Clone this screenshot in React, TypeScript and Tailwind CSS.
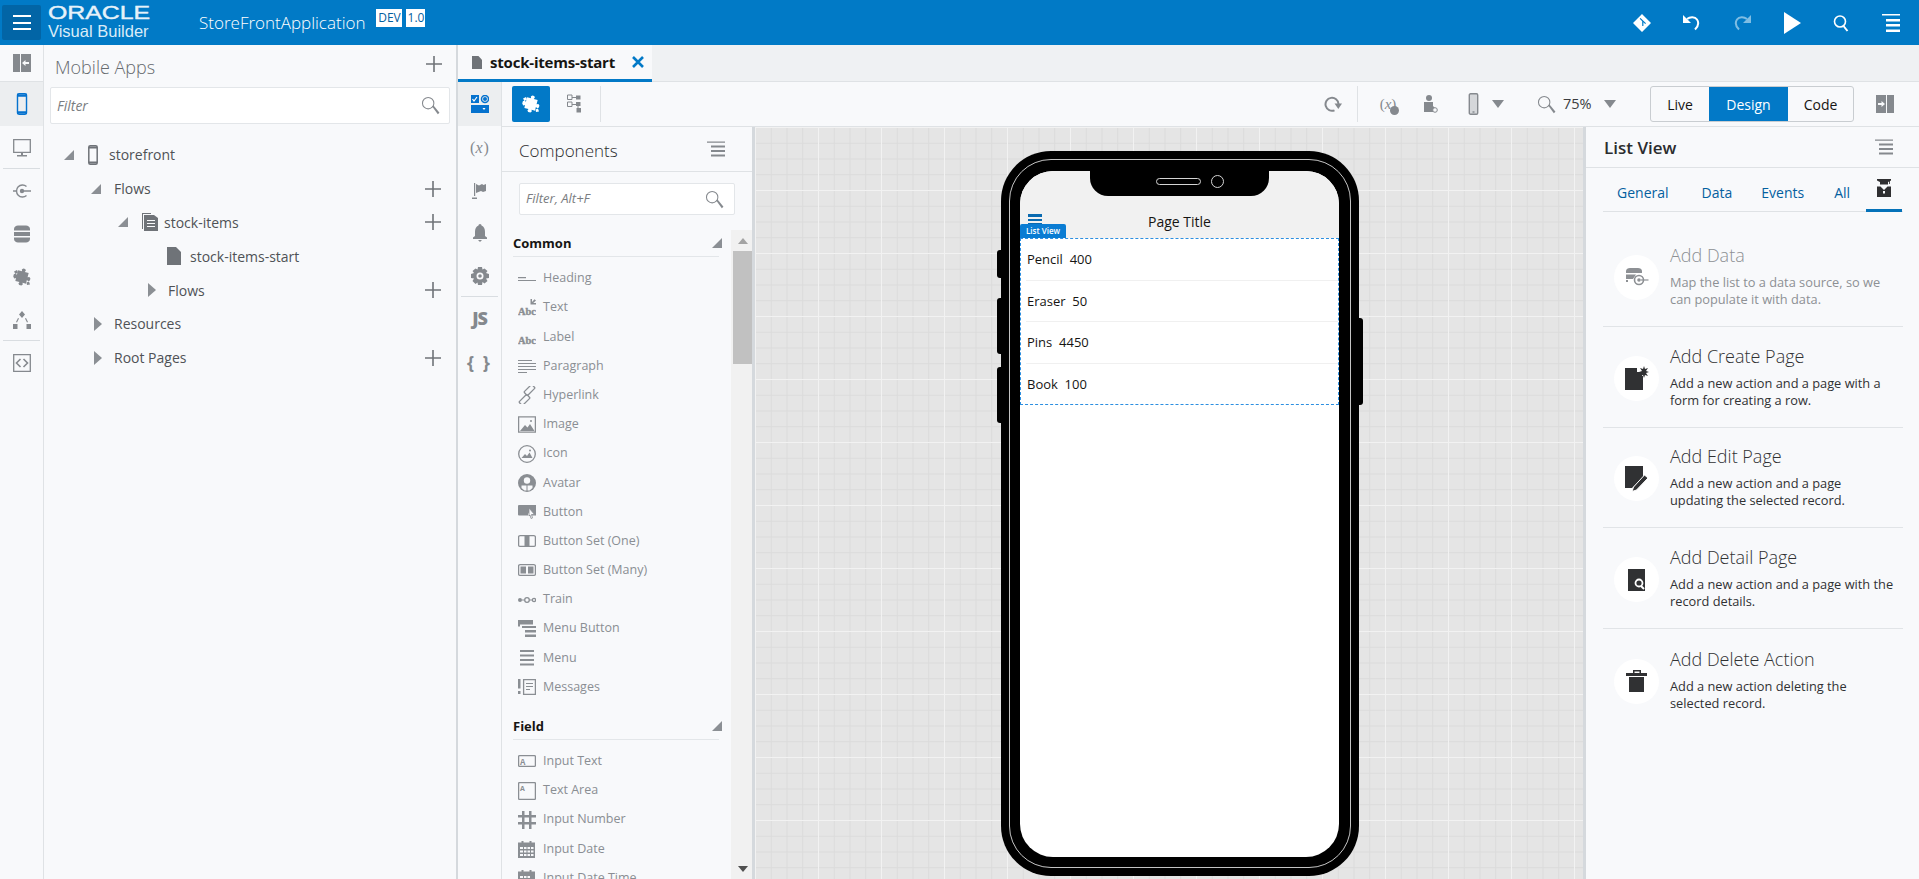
import type { ReactNode } from 'react';

type IconProps = { className?: string };

function Svg({ className, size = 18, children }: { className?: string; size?: number; children: ReactNode }) {
	return (
		<svg viewBox="0 0 18 18" width={size} height={size} fill="currentColor" className={className}>
			{children}
		</svg>
	);
}

const line = { fill: 'none', stroke: 'currentColor', strokeWidth: 1.3 };

// --- shared icons ---
function PlusIcon() {
	return (
		<svg viewBox="0 0 16 16" width="16" height="16" className="text-[#6f7378]" fill="currentColor">
			<path d="M7.2 0h1.6v7.2H16v1.6H8.8V16H7.2V8.8H0V7.2h7.2z" />
		</svg>
	);
}
function SearchIcon({ className }: IconProps) {
	return (
		<Svg className={className} size={19}>
			<circle cx="6.8" cy="6.8" r="5.4" fill="none" stroke="currentColor" strokeWidth="1" />
			<path d="M10.6 10l1.3-1.100 5.600 7-1.600 1.300z" />
		</Svg>
	);
}
function LinesIcon({ className }: IconProps) {
	return (
		<Svg className={className}>
			<path d="M0 1.500h18v1.200H0zM4 5.500h14v2H4zM4 10h14v2H4zM4 14.500h14v2H4z" />
		</Svg>
	);
}
function PuzzleIcon({ className }: IconProps) {
	return (
		<Svg className={className}>
			<g transform="rotate(14 9 9)">
				<path d="M3.500 3.500h4.200L7 1.800 8.200.5h2l1 1.300-.7 1.700h4V8l1.700-.7 1.300 1v2.200l-1.300 1-1.700-.7v3.700h-3.600l.7 1.700-1.100 1.300H8.200l-1.100-1.300.7-1.700H3.500v-3l-1.700.8L.4 10.700V8.300l1.400-1.100 1.700.8z" />
			</g>
			<path d="M1 3.500l3-1.500 1 2.500-2.500 1.500zM13.500 14.500l2.500-1 1 3-3 .5z" />
		</Svg>
	);
}
function PageIcon({ className }: IconProps) {
	return (
		<svg viewBox="0 0 14 18" width="14" height="18" fill="currentColor" className={className}>
			<path d="M0 0h9l5 5v13H0z" />
		</svg>
	);
}
function Phone({ className }: IconProps) {
	return (
		<svg viewBox="0 0 10 20" width="10" height="20" fill="none" className={className}>
			<rect x=".8" y=".8" width="8.4" height="18.4" rx="1.5" stroke="currentColor" strokeWidth="1.5" />
			<path d="M.8 2.500h8.400M.8 17.500h8.400" stroke="currentColor" strokeWidth="1.8" />
		</svg>
	);
}
function TriOpen() {
	return (
		<svg viewBox="0 0 10 10" width="10" height="10" fill="#8b8f94">
			<path d="M10 0v10H0z" />
		</svg>
	);
}
function TriClosed() {
	return (
		<svg viewBox="0 0 8 14" width="8" height="14" fill="#8b8f94">
			<path d="M0 0l8 7-8 7z" />
		</svg>
	);
}

// --- left rail icons ---
function CollapseIcon({ flip }: { flip?: boolean }) {
	return (
		<Svg className={flip ? 'text-[#85898e] -scale-x-100' : 'text-[#85898e]'}>
			<path d="M0 0h7v18H0zM8 0h10v18H8z" />
			<path d="M9 9l3.500-3v2H16v2h-3.500v2z" fill="#f8f9fb" />
		</Svg>
	);
}
function ServiceIcon() {
	return (
		<Svg className="text-[#85898e]">
			<circle cx="9" cy="9" r="2.200" />
			<path d="M13.500 4.500A6 6 0 1 0 13.500 13.500" {...line} strokeWidth="1.4" />
			<path d="M0 9h3M9 9h9" {...line} />
		</Svg>
	);
}
function DatabaseIcon() {
	return (
		<Svg className="text-[#85898e]">
			<path d="M1 4c0-2 2-3.500 4-3.500h8c2 0 4 1.500 4 3.500v1.500H1zM1 7h16v4H1zM1 12.500h16V14c0 2-2 3.500-4 3.500H5c-2 0-4-1.500-4-3.500z" />
		</Svg>
	);
}
function ProcessIcon() {
	return (
		<Svg className="text-[#85898e]">
			<path d="M9 0l3 3.500L9 7 6 3.500zM0 13h4.500v5H0zM13.500 13H18v5h-4.500zM3 11l2-4 1 .5-2 4zM15 11l-2-4-1 .5 2 4z" />
		</Svg>
	);
}
function CodeFrameIcon() {
	return (
		<Svg className="text-[#85898e]">
			<path d="M.7.7h16.600v16.600H.7z" {...line} />
			<path d="M7.500 5L3.500 9l4 4M10.500 5l4 4-4 4" {...line} strokeWidth="1.6" />
		</Svg>
	);
}

// --- component list icons ---
const Abc = () => (
	<text x="0" y="16" fontSize="11" fontWeight="700" stroke="currentColor" strokeWidth=".4" fontFamily="'Liberation Serif', serif" textLength="18" lengthAdjust="spacingAndGlyphs">
		Abc
	</text>
);
const listIcons: Record<string, ReactNode> = {
	Heading: <path d="M0 7h8v1.300H0zM0 10h18v1H0z" />,
	Text: (
		<>
			<path d="M12.500 0H14v3l2.500-2.800L18 1.500 15.200 4H18v1.500h-5.500z" />
			<Abc />
		</>
	),
	Label: <Abc />,
	Paragraph: <path d="M0 3h14v1H0zM0 6h18v1H0zM0 9h18v1H0zM0 12h18v1H0zM0 15h9v1H0z" />,
	Hyperlink: (
		<>
			<rect x="9" y="-1.500" width="5" height="11" rx="1" transform="rotate(45 11.500 4)" {...line} />
			<rect x="4" y="8.500" width="5" height="11" rx="1" transform="rotate(45 6.500 14)" {...line} />
		</>
	),
	Image: (
		<>
			<path d="M.6.9h16.800v15.200H.6z" {...line} />
			<path d="M2 15l5-6 2.500 2.500L12 8l4.500 7z" />
			<circle cx="13" cy="5" r="1" />
		</>
	),
	Icon: (
		<>
			<circle cx="9" cy="9" r="8.300" {...line} />
			<path d="M3.500 13l3.500-4 2 2 2.500-3.500L14.500 13z" />
			<circle cx="12" cy="5.500" r="1" />
		</>
	),
	Avatar: (
		<>
			<circle cx="9" cy="9" r="9" />
			<circle cx="9" cy="6.500" r="3.200" fill="#f8f9fb" />
			<path d="M3.500 11.500h11v2.500l-3 2.500h-5l-3-2.500z" fill="#f8f9fb" />
			<path d="M8.500 11h1v6h-1z" />
		</>
	),
	Button: (
		<>
			<path d="M1 2h17v10.500h-6l-2-3v3H1a1 1 0 0 1-1-1V3a1 1 0 0 1 1-1z" />
			<path d="M11 5l5.500 6.500h-3l1 3.500-1.500.5-1-3.500L11 13z" fill="#f8f9fb" stroke="currentColor" strokeWidth=".8" />
		</>
	),
	'Button Set (One)': (
		<>
			<rect x=".6" y="3.600" width="16.800" height="10.800" rx="1.5" {...line} />
			<path d="M6.500 4h5v10h-5z" />
		</>
	),
	'Button Set (Many)': (
		<>
			<rect x=".6" y="3.600" width="16.800" height="10.800" rx="1.5" {...line} />
			<path d="M2.500 5.500h5.500v7H2.500zM10 5.500h5.500v7H10z" />
		</>
	),
	Train: (
		<>
			<circle cx="2" cy="9" r="2" />
			<circle cx="9" cy="9" r="2.300" {...line} />
			<circle cx="16" cy="9" r="1.600" {...line} />
			<path d="M4 8.500h2.500v1H4zM11.500 8.500H14v1h-2.500z" />
		</>
	),
	'Menu Button': <path d="M0 0h15v4.500H2V6.500H0zM4 6h14v2H4zM7 10h11v2.500H7zM7 14.500h11V17H7z" />,
	Menu: <path d="M2 1h14v2H2zM2 5.500h14v2H2zM2 10h14v2H2zM2 14.500h14v2H2z" />,
	Messages: (
		<>
			<path d="M0 1h2.500v9.500H0zM0 13h2.500v3H0z" />
			<path d="M5.600 1.600h11.800v14.800H5.600z" {...line} />
			<path d="M8 5h7v1H8zM8 8h7v1H8zM8 11h4v1H8z" />
		</>
	),
	'Input Text': (
		<>
			<rect x=".6" y="3.600" width="16.800" height="10.800" rx="1" {...line} />
			<text x="2" y="12.500" fontSize="9" fontWeight="700" fontFamily="'Liberation Mono', monospace">A</text>
		</>
	),
	'Text Area': (
		<>
			<rect x=".6" y=".6" width="16.800" height="16.800" rx="1" {...line} />
			<text x="2" y="9" fontSize="8" fontWeight="700" fontFamily="'Liberation Mono', monospace">A</text>
		</>
	),
	'Input Number': <path d="M4 0h2.500v18H4zM11 0h2.500v18H11zM0 4h18v2.500H0zM0 11h18v2.500H0z" />,
	'Input Date': (
		<>
			<path d="M0 2.500h3.500V1h2v1.500h6V1h2v1.500H17V18H0z" />
			<path d="M2 7h3v2H2zM6 7h2.500v2H6zM9.500 7H12v2H9.500zM13 7h2.500v2H13zM2 10.500h3v2H2zM6 10.500h2.500v2H6zM9.500 10.500H12v2H9.500zM13 10.500h2.500v2H13zM2 14h3v2H2zM6 14h2.500v2H6zM9.500 14H12v2H9.500zM13 14h2.500v2H13z" fill="#f8f9fb" />
		</>
	),
	'Input Date Time': (
		<>
			<path d="M0 2.500h3.500V1h2v1.500h6V1h2v1.500H17V18H0z" />
			<path d="M2 7h3v2H2zM6 7h2.500v2H6zM9.500 7H12v2H9.500zM2 10.500h3v2H2zM6 10.500h2.500v2H6z" fill="#f8f9fb" />
		</>
	),
};

const commonItems = ['Heading', 'Text', 'Label', 'Paragraph', 'Hyperlink', 'Image', 'Icon', 'Avatar', 'Button', 'Button Set (One)', 'Button Set (Many)', 'Train', 'Menu Button', 'Menu', 'Messages'];
const fieldItems = ['Input Text', 'Text Area', 'Input Number', 'Input Date', 'Input Date Time'];

function PaletteRow({ name }: { name: string }) {
	return (
		<div className="flex h-[29.2px] shrink-0 items-center pl-[16px] text-[#8a8e93]">
			<Svg className="shrink-0">{listIcons[name]}</Svg>
			<span className="ml-[7px] text-[12.5px] whitespace-nowrap">{name}</span>
		</div>
	);
}

function PaletteHeading({ title }: { title: string }) {
	return (
		<div className="mx-[11px] flex h-[25px] w-[206px] shrink-0 items-center justify-between border-b border-[#e3e6e9]">
			<span className="text-[13px] font-bold text-[#161513]">{title}</span>
			<span className="mr-[-3px] mb-[2px]"><TriOpen /></span>
		</div>
	);
}

// --- tree ---
type TreeRow = { label: string; indent: number; open?: boolean; icon?: ReactNode; textGap: number; plus?: boolean };
const tree: TreeRow[] = [
	{ label: 'storefront', indent: 20, open: true, icon: <Phone className="text-[#6f7378]" />, textGap: 11 },
	{ label: 'Flows', indent: 47, open: true, textGap: 13, plus: true },
	{
		label: 'stock-items',
		indent: 74,
		open: true,
		icon: (
			<svg viewBox="0 0 16 18" width="16" height="18" className="text-[#6f7378]" fill="currentColor">
				<path d="M0 0h9v1H1v15H0z" />
				<path d="M2 2h10l4 3v13H2zM5 7v1h8V7zm0 3v1h8v-1zm0 3v1h8v-1z" />
			</svg>
		),
		textGap: 6,
		plus: true,
	},
	{ label: 'stock-items-start', indent: 123, icon: <PageIcon className="text-[#6f7378]" />, textGap: 9 },
	{ label: 'Flows', indent: 104, textGap: 12, plus: true },
	{ label: 'Resources', indent: 50, textGap: 12 },
	{ label: 'Root Pages', indent: 50, textGap: 12, plus: true },
];

function Tree() {
	return (
		<div className="mt-[14px]">
			{tree.map((row, i) => (
				<div key={i} className="flex h-[33.8px] items-center" style={{ paddingLeft: row.indent }}>
					{row.label !== 'stock-items-start' && (row.open ? <TriOpen /> : <TriClosed />)}
					{row.icon && <span className={row.open ? 'ml-[14px] flex' : 'flex'}>{row.icon}</span>}
					<span className="text-[14px] text-[#4f5256]" style={{ marginLeft: row.textGap }}>{row.label}</span>
					{row.plus && <span className="mr-[15px] ml-auto"><PlusIcon /></span>}
				</div>
			))}
		</div>
	);
}

function RailItem({ active, divider, h = 43, children }: { active?: boolean; divider?: boolean; h?: number; children: ReactNode }) {
	return (
		<div className={`relative flex shrink-0 items-center justify-center ${active ? 'bg-[#eceef0]' : ''}`} style={{ height: h }}>
			{children}
			{divider && <div className="absolute inset-x-[3px] bottom-0 h-px bg-[#d9dde1]" />}
		</div>
	);
}

function LeftRail() {
	return (
		<div className="flex w-[44px] shrink-0 flex-col border-r border-[#dfe2e5]">
			<div className="flex h-[37px] shrink-0 items-center justify-center border-b border-[#dfe2e5]"><CollapseIcon /></div>
			<RailItem active h={44}><Phone className="scale-x-[1.1] scale-y-[1.1] text-[#0572ce]" /></RailItem>
			<RailItem divider>
				<Svg className="text-[#85898e]">
					<path d="M.7.7h16.600v12.600H.7z" {...line} />
					<path d="M8 13.500h2V16H8zM4 16h10v1.500H4z" />
				</Svg>
			</RailItem>
			<RailItem><ServiceIcon /></RailItem>
			<RailItem><DatabaseIcon /></RailItem>
			<RailItem><PuzzleIcon className="text-[#85898e]" /></RailItem>
			<RailItem divider><ProcessIcon /></RailItem>
			<RailItem><CodeFrameIcon /></RailItem>
		</div>
	);
}

function SecondaryRail() {
	return (
		<div className="flex w-[44px] shrink-0 flex-col border-r border-[#dfe2e5] text-[#85898e]">
			<RailItem active h={44}>
				<Svg className="text-[#0572ce]">
					<path d="M0 0h8v8H0zM0 10h18v8H0z" />
					<circle cx="14" cy="4" r="3.5" fill="none" stroke="currentColor" strokeWidth="1.5" />
					<circle cx="14" cy="4" r="2" />
					<path d="M1.500 4l1.500 2 3-4" fill="none" stroke="#fff" strokeWidth="1.2" />
					<path d="M11.500 13h3l-1.500 2z" fill="#fff" />
				</Svg>
			</RailItem>
			<RailItem h={43}>
				<span className="font-['Liberation_Serif',serif] text-[16px]">(<i className="tracking-[1px]">x</i>)</span>
			</RailItem>
			<RailItem h={43}>
				<Svg>
					<path d="M3 1h1.200v13H3zM1 15.500h5V17H1z" />
					<path d="M5 2l3 1.500L11 2l1.500 1L15 2v7l-3 1-2-1-5 2z" />
				</Svg>
			</RailItem>
			<RailItem h={42}>
				<Svg>
					<path d="M9 0c1 0 1.500.8 1.500 1.500C13 2.500 14 5 14 8v4l2 1.500V15H2v-1.500L4 12V8c0-3 1-5.500 3.500-6.500C7.500.8 8 0 9 0zM7 16h4l-2 2z" />
				</Svg>
			</RailItem>
			<RailItem h={43} divider>
				<Svg>
					<path fillRule="evenodd" d="M7 0h4l.5 2.500 2-1L16.500 4l-1.500 2 3 1v4l-3 .5 1.500 2.500-3 2.500-2-1.500L11 18H7l-.5-2.500-2 1.500L1.500 14 3 11.500 0 11V7l3-1-1.500-2 3-2.500 2 1zM9 5.500a3.500 3.500 0 1 0 0 7 3.500 3.500 0 0 0 0-7z" />
					<circle cx="9" cy="9" r="1.8" />
				</Svg>
			</RailItem>
			<RailItem h={43}><span className="text-[18px] font-extrabold tracking-[-1px]">JS</span></RailItem>
			<RailItem h={44}><span className="text-[18px] font-bold tracking-[2px]">{'{ }'}</span></RailItem>
		</div>
	);
}

function Toolbar() {
	return (
		<div className="flex h-[45px] shrink-0 items-center border-b border-[#dfe2e5] bg-[#f8f9fb] pl-[10px] text-[#85898e]">
			<div className="flex h-[36px] w-[38px] items-center justify-center rounded-[2px] bg-[#0279c7]">
				<PuzzleIcon className="text-white" />
			</div>
			<div className="ml-[17px] flex w-[14px]">
				<svg viewBox="0 0 14 20" width="14" height="20" fill="currentColor">
					<path d="M.5 1h4.500v4.500H.5zM.5 8h4.500v4.500H.5z" fill="none" stroke="currentColor" />
					<path d="M5 3h4v1H5zM5 10h4v1H5zM9 1.500h4.500v4H9zM9 8h4.500v4H9zM9.500 14h4.500v4.500H9.500zM10.500 12h1v2h-1z" />
				</svg>
			</div>
			<div className="ml-[19px] h-[36px] w-px bg-[#dfe2e5]" />
			<div className="ml-auto flex items-center">
				<svg viewBox="0 0 18 18" width="18" height="18" fill="none">
					<path d="M14.500 9A6.500 6.500 0 1 0 10.500 15.300" stroke="currentColor" strokeWidth="2" />
					<path d="M10.500 8.500h7.500l-3.700 5.500z" fill="currentColor" />
				</svg>
				<div className="mr-[20px] ml-[15px] h-[36px] w-px bg-[#dfe2e5]" />
				<span className="relative flex h-[22px] w-[20px] items-center justify-center font-['Liberation_Serif',serif] text-[15px]">
					(<i>x</i>)
					<span className="absolute right-[-1px] bottom-0 h-[9px] w-[9px] rounded-full bg-[#85898e]" />
				</span>
				<Svg className="ml-[23px]">
					<circle cx="8" cy="3" r="3" />
					<path d="M3 7h9v4l2 2-1 3-1 1H3z" />
					<circle cx="14" cy="15" r="2.3" fill="#f8f9fb" stroke="currentColor" />
				</Svg>
				<span className="ml-[29px] flex"><svg viewBox="0 0 10 22" width="11" height="22" fill="none"><rect x=".8" y=".8" width="8.4" height="20.4" rx="1.2" fill="#d5d7da" stroke="currentColor" strokeWidth="1.4" /><path d="M4 19h2" stroke="currentColor" strokeWidth="1.4" /></svg></span>
				<svg viewBox="0 0 12 8" width="12" height="8" fill="currentColor" className="ml-[13px]"><path d="M0 0h12L6 8z" /></svg>
				<SearchIcon className="ml-[33px] text-[#85898e]" />
				<span className="ml-[7px] w-[33px] text-[14.5px] text-[#3a3c3f]">75%</span>
				<svg viewBox="0 0 12 8" width="12" height="8" fill="currentColor" className="ml-[8px]"><path d="M0 0h12L6 8z" /></svg>
				<div className="ml-[34px] flex h-[36px] overflow-hidden rounded-[3px] border border-[#c9cdd1] text-[14px]">
					<span className="flex w-[58px] items-center justify-center text-[#161513]">Live</span>
					<span className="flex w-[79px] items-center justify-center bg-[#0279c7] text-white">Design</span>
					<span className="flex w-[65px] items-center justify-center text-[#161513]">Code</span>
				</div>
				<span className="mr-[25px] ml-[22px] flex"><CollapseIcon flip /></span>
			</div>
		</div>
	);
}

function ComponentsPanel() {
	return (
		<div className="flex w-[253px] shrink-0 flex-col border-r-[3px] border-[#d5d9dd] bg-[#f8f9fb]">
			<div className="flex h-[45px] shrink-0 items-center justify-between border-b border-[#dfe2e5] pr-[27px] pl-[17px]">
				<span className="pt-[3px] text-[17px] font-light text-[#2b2c2e]">Components</span>
				<LinesIcon className="text-[#85898e]" />
			</div>
			<div className="mx-[17px] mt-[11px] flex h-[32px] shrink-0 items-center justify-between rounded-[2px] border border-[#e3e6e9] bg-white pr-[10px] pl-[6px]">
				<span className="text-[13px] text-[#7a7d81] italic">Filter, Alt+F</span>
				<SearchIcon className="text-[#85898e]" />
			</div>
			<div className="mt-[15px] flex min-h-0 flex-1">
				<div className="flex min-w-0 flex-1 flex-col overflow-hidden pt-[2px]">
					<PaletteHeading title="Common" />
					<div className="h-[7px] shrink-0" />
					{commonItems.map((n) => <PaletteRow key={n} name={n} />)}
					<div className="h-[13px] shrink-0" />
					<PaletteHeading title="Field" />
					<div className="h-[7px] shrink-0" />
					{fieldItems.map((n) => <PaletteRow key={n} name={n} />)}
				</div>
				<div className="flex w-[21px] shrink-0 flex-col bg-[#f1f1f1] pl-[2px]">
					<div className="flex h-[21px] shrink-0 items-center justify-center">
						<svg viewBox="0 0 10 6" width="10" height="6" fill="#a3a3a3"><path d="M0 6h10L5 0z" /></svg>
					</div>
					<div className="h-[113px] shrink-0 bg-[#c1c1c1]" />
					<div className="flex flex-1 items-end justify-center pb-[7px]">
						<svg viewBox="0 0 10 6" width="10" height="6" fill="#505050"><path d="M0 0h10L5 6z" /></svg>
					</div>
				</div>
			</div>
		</div>
	);
}

function Device() {
	const rows = ['Pencil\u00a0\u00a0400', 'Eraser\u00a0\u00a050', 'Pins\u00a0\u00a04450', 'Book\u00a0\u00a0100'];
	return (
		<div className="relative flex h-[725px] w-[358px] shrink-0 rounded-[50px] bg-black pt-[20px] pr-[20px] pb-[19px] pl-[19px]">
			{/* side buttons */}
			<div className="absolute top-[99px] left-[-4px] h-[28px] w-[4px] rounded-l-[3px] bg-black" />
			<div className="absolute top-[147px] left-[-4px] h-[56px] w-[4px] rounded-l-[3px] bg-black" />
			<div className="absolute top-[216px] left-[-4px] h-[56px] w-[4px] rounded-l-[3px] bg-black" />
			<div className="absolute top-[167px] right-[-4px] h-[87px] w-[4px] rounded-r-[3px] bg-black" />
			<div className="absolute inset-[8px] rounded-[42px] border border-[#c4c4c4]" />
			<div className="relative flex flex-1 flex-col overflow-hidden rounded-[33px] bg-white">
				<div className="flex h-[67px] shrink-0 items-end justify-center bg-[#f1f1f1] pb-[6px] text-[14px] text-[#161513]">Page Title</div>
				<div className="flex h-[167px] shrink-0 flex-col border border-dashed border-[#2d8fe0] pl-[5px]">
					{rows.map((r, i) => (
						<div key={r} className={`flex flex-1 items-center pt-[1px] pl-[1px] text-[13px] text-[#161513] ${i < 3 ? 'border-b border-[#f0f0f0]' : ''}`}>{r}</div>
					))}
				</div>
				{/* notch */}
				<div className="absolute top-0 left-[70px] flex h-[25px] w-[179px] items-center justify-center gap-[10px] rounded-b-[18px] bg-black pb-[4px] pl-[20px]">
					<span className="h-[7px] w-[45px] rounded-full border border-[#d4d4d4]" />
					<span className="h-[13px] w-[13px] rounded-full border border-[#d4d4d4]" />
				</div>
				<div className="absolute top-[43px] left-[8px] flex w-[14px] flex-col gap-[2px]">
					<span className="h-[2.5px] bg-[#0a6ab0]" />
					<span className="h-[2.5px] bg-[#0a6ab0]" />
					<span className="h-[2.5px] bg-[#0a6ab0]" />
				</div>
				<div className="absolute top-[53px] left-0 flex h-[14px] w-[46px] items-center justify-center rounded-t-[2px] bg-[#0a7cd3] text-[8px] font-semibold text-white">List View</div>
			</div>
		</div>
	);
}

function Canvas() {
	return (
		<div className="min-w-0 flex-1 overflow-hidden bg-[#e5e5e5] bg-[linear-gradient(#f2f2f2_1px,transparent_1px),linear-gradient(90deg,#f2f2f2_1px,transparent_1px),linear-gradient(#dbdbdb_1px,transparent_1px),linear-gradient(90deg,#dbdbdb_1px,transparent_1px)] bg-[size:63px_63px,63px_63px,15.75px_15.75px,15.75px_15.75px] pt-[24px] pl-[246px]">
			<Device />
		</div>
	);
}

type Action = { title: string; desc: [string, string]; disabled?: boolean; icon: ReactNode };
const actions: Action[] = [
	{
		title: 'Add Data',
		desc: ['Map the list to a data source, so we', 'can populate it with data.'],
		disabled: true,
		icon: (
			<svg viewBox="0 0 24 18" width="24" height="18" fill="currentColor">
				<path d="M1 3c0-2 2-3 4-3h8c2 0 4 1 4 3v2H1zM1 6.500h10L8 11H1zM1 12h2v2H1z" />
				<circle cx="14" cy="12" r="4.5" fill="none" stroke="currentColor" strokeWidth="1.6" />
				<circle cx="14" cy="12" r="1.8" />
				<path d="M16 11.400h7.500v1.200H16z" />
			</svg>
		),
	},
	{
		title: 'Add Create Page',
		desc: ['Add a new action and a page with a', 'form for creating a row.'],
		icon: (
			<svg viewBox="0 0 24 24" width="24" height="24" fill="currentColor">
				<path d="M0 2h12v4h5v4h1v14H0z" />
				<path d="M19 0l1 3 3-1-2 3 3 1-3 1 2 3-3-1-1 3-1-3-3 1 2-3-3-1 3-1-2-3 3 1z" />
			</svg>
		),
	},
	{
		title: 'Add Edit Page',
		desc: ['Add a new action and a page', 'updating the selected record.'],
		icon: (
			<svg viewBox="0 0 24 26" width="24" height="26" fill="currentColor">
				<path d="M0 0h18v12L7 22H0z" />
				<path d="M19.500 9l3.500 3L11.500 24 7 25.500 8.500 21z" stroke="#fff" />
			</svg>
		),
	},
	{
		title: 'Add Detail Page',
		desc: ['Add a new action and a page with the', 'record details.'],
		icon: (
			<svg viewBox="0 0 18 22" width="18" height="22" fill="currentColor">
				<path d="M0 0h17v22H0z" />
				<circle cx="11" cy="14" r="3.5" fill="none" stroke="#fff" strokeWidth="1.8" />
				<path d="M13 17l3 3" stroke="#fff" strokeWidth="2" />
			</svg>
		),
	},
	{
		title: 'Add Delete Action',
		desc: ['Add a new action deleting the', 'selected record.'],
		icon: (
			<svg viewBox="0 0 22 22" width="22" height="22" fill="currentColor">
				<path d="M7 0h8v3h6v3H0V3h7zm1.500 1.500V3h5V1.500zM3 7h15v15H3z" />
			</svg>
		),
	},
];

function PropertiesPanel() {
	return (
		<div className="flex w-[336px] shrink-0 flex-col border-l-[3px] border-[#d5d9dd] bg-[#f8f9fb]">
			<div className="flex h-[41px] shrink-0 items-center justify-between border-b border-[#dfe2e5] pr-[26px] pl-[18px]">
				<span className="pt-[1px] text-[17px] font-semibold text-[#2b2c2e]">List View</span>
				<LinesIcon className="text-[#85898e]" />
			</div>
			<div className="mx-[17px] flex h-[44px] w-[300px] shrink-0 items-center border-b border-[#dfe2e5] text-[14px] text-[#04609f]">
				<span className="ml-[14px] pt-[5px]">General</span>
				<span className="ml-[33px] pt-[5px]">Data</span>
				<span className="ml-[29px] pt-[5px]">Events</span>
				<span className="ml-[30px] pt-[5px]">All</span>
				<div className="ml-[16px] flex h-[44px] w-[36px] items-center justify-center border-b-[3px] border-[#0572b9]">
					<svg viewBox="0 0 14 18" width="14" height="18" fill="#2f2f31">
						<path d="M0 0h14v1.500l-1 .5V5h-.8V2.500L11 3v2.500H3V3L0 1.500zM0 7.500h3.500L7 11l3.500-3.500H14V18H0z" />
						<path d="M6 12h2v2.500H6z" fill="#f8f9fb" />
					</svg>
				</div>
			</div>
			<div className="mx-[17px] mt-[14px] flex w-[300px] flex-col">
				{actions.map((a, i) => (
					<div key={a.title} className={`flex h-[100.8px] shrink-0 items-center ${i < 4 ? 'border-b border-[#e1e4e7]' : ''} ${a.disabled ? 'text-[#8d9094]' : 'text-[#303133]'}`}>
						<div className="mt-[3px] ml-[11px] flex h-[45px] w-[45px] shrink-0 items-center justify-center rounded-full bg-white">{a.icon}</div>
						<div className="ml-[11px] flex flex-col">
							<span className="mt-[-1px] text-[18px] leading-[24px] font-light">{a.title}</span>
							<span className="mt-[7px] text-[12.8px] leading-[17px]">{a.desc[0]}</span>
							<span className="text-[12.8px] leading-[17px]">{a.desc[1]}</span>
						</div>
					</div>
				))}
			</div>
		</div>
	);
}

function Header() {
	return (
		<div className="flex h-[45px] shrink-0 items-center bg-[#017ac6] text-white">
			<div className="ml-[2px] flex h-[35px] w-[39px] flex-col items-center justify-center gap-[4.5px] rounded-[2px] bg-[#0265a6]">
				<span className="h-[2px] w-[18px] bg-white" />
				<span className="h-[2px] w-[18px] bg-white" />
				<span className="h-[2px] w-[18px] bg-white" />
			</div>
			<div className="ml-[7px] flex w-[106px] flex-col font-['Liberation_Sans',sans-serif]">
				<span className="origin-left scale-x-[1.38] text-[18px] leading-[17px] text-[#e6f2fa] [-webkit-text-stroke:0.4px_#e6f2fa]">ORACLE</span>
				<span className="text-[16.5px] leading-[18px] text-[#d9ecf8]">Visual Builder</span>
			</div>
			<span className="ml-[45px] text-[17px] font-light">StoreFrontApplication</span>
			<span className="mb-[9px] ml-[11px] flex h-[18px] w-[26px] items-center justify-center bg-white text-[12px] text-[#04609f]">DEV</span>
			<span className="mb-[9px] ml-[4px] flex h-[18px] w-[19px] items-center justify-center bg-white text-[12px] text-[#04609f]">1.0</span>
			<div className="mr-[3px] ml-auto flex items-center">
				<span className="flex w-[50px] justify-center">
					<svg viewBox="0 0 18 18" width="18" height="18" fill="currentColor">
						<path fillRule="evenodd" d="M9 0l9 9-9 9-9-9zM7.500 4l-.8.800L9.200 7.300V12h1.200V8.200l1.800 1.800.8-.8z" />
					</svg>
				</span>
				<span className="flex w-[50px] justify-center">
					<svg viewBox="0 0 18 18" width="18" height="18" fill="none">
						<path d="M0 1v8h8z" fill="currentColor" />
						<path d="M4 5c3-2.500 8-2.500 10 .5 2 3 1 7-2 10" stroke="currentColor" strokeWidth="2" />
					</svg>
				</span>
				<span className="flex w-[50px] justify-center text-[#7fbde3]">
					<svg viewBox="0 0 18 18" width="18" height="18" fill="none" className="-scale-x-100">
						<path d="M0 1v8h8z" fill="currentColor" />
						<path d="M4 5c3-2.500 8-2.500 10 .5 2 3 1 7-2 10" stroke="currentColor" strokeWidth="2" />
					</svg>
				</span>
				<span className="flex w-[50px] justify-center">
					<svg viewBox="0 0 17 22" width="17" height="22" fill="currentColor"><path d="M0 0l17 11L0 22z" /></svg>
				</span>
				<span className="flex w-[48px] justify-center">
					<svg viewBox="0 0 16 18" width="16" height="18" fill="none" stroke="currentColor">
						<circle cx="7" cy="7.500" r="5.500" strokeWidth="1.6" />
						<path d="M10.500 12l4 5" strokeWidth="2" />
					</svg>
				</span>
				<span className="flex w-[51px] justify-center">
					<svg viewBox="0 0 18 18" width="18" height="18" fill="currentColor">
						<path d="M0 0h18v1.500H0zM4 5h14v2.500H4zM4 10h14v2.500H4zM4 15.500h14V18H4z" />
					</svg>
				</span>
			</div>
		</div>
	);
}

export default function App() {
	return (
		<div className="flex h-screen w-full flex-col overflow-hidden bg-[#f8f9fb] font-['Open_Sans',sans-serif]">
			<Header />
			<div className="flex min-h-0 flex-1">
				<LeftRail />
				{/* explorer */}
				<div className="flex w-[414px] shrink-0 flex-col border-r-[2px] border-[#d5d9dd]">
					<div className="flex h-[37px] shrink-0 items-center justify-between pr-[14px] pl-[11px]">
						<span className="pt-[7px] text-[18px] font-light text-[#666a6e]">Mobile Apps</span>
						<PlusIcon />
					</div>
					<div className="mx-[6px] mt-[5px] flex h-[37px] shrink-0 items-center justify-between rounded-[2px] border border-[#e3e6e9] bg-white pr-[9px] pl-[6px]">
						<span className="text-[14px] text-[#7a7d81] italic">Filter</span>
						<SearchIcon className="text-[#85898e]" />
					</div>
					<Tree />
				</div>
				<div className="flex min-w-0 flex-1 flex-col">
					{/* tab strip */}
					<div className="flex h-[37px] shrink-0 bg-[#eff1f3]">
						<div className="flex w-[194px] items-center border-b-[3px] border-[#0279c7] bg-[#f8f9fb] pl-[14px]">
							<PageIcon className="h-[13px] w-[10px] text-[#6f7378]" />
							<span className="ml-[8px] text-[15px] font-bold tracking-[-0.2px] whitespace-nowrap text-[#161513]">stock-items-start</span>
							<svg viewBox="0 0 12 12" width="12" height="12" className="mr-[8px] ml-auto text-[#0279c7]" stroke="currentColor" strokeWidth="2.6">
								<path d="M1 1l10 10M11 1L1 11" />
							</svg>
						</div>
						<div className="flex-1 border-b border-[#dfe2e5]" />
					</div>
					<div className="flex min-h-0 flex-1">
						<SecondaryRail />
						<div className="flex min-w-0 flex-1 flex-col">
							<Toolbar />
							<div className="flex min-h-0 flex-1">
								<ComponentsPanel />
								<Canvas />
								<PropertiesPanel />
							</div>
						</div>
					</div>
				</div>
			</div>
		</div>
	);
}
